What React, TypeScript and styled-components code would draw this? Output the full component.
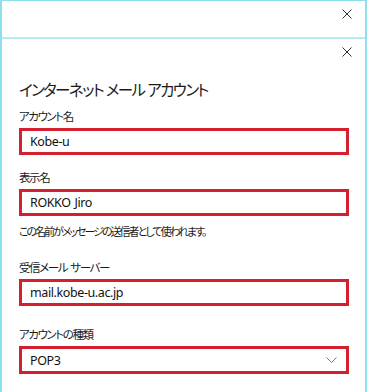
import styled, { createGlobalStyle } from "styled-components";

const GlobalStyle = createGlobalStyle`
  html, body {
    margin: 0;
    padding: 0;
    background: #ffffff;
  }
  * {
    box-sizing: border-box;
  }
`;

const jp = `"Noto Sans CJK JP", "Noto Sans", sans-serif`;
const latin = `"Noto Sans", "Noto Sans CJK JP", sans-serif`;

const Frame = styled.div`
  width: 367px;
  height: 392px;
  background: #ffffff;
  border-top: 1px solid #8fdfea;
  border-left: 2px solid #8fdfea;
  border-right: 2px solid #8fdfea;
  display: flex;
  flex-direction: column;
  overflow: hidden;
  color: #1a1a1a;
  font-family: ${jp};
`;

const TitleBar = styled.div<{ $h: number }>`
  height: ${(p) => p.$h}px;
  flex: none;
  display: flex;
  justify-content: flex-end;
  padding: 8px 13px 0 0;
`;

const Separator = styled.div`
  height: 2px;
  flex: none;
  background: #b6ebf2;
`;

const CloseButton = styled.button`
  width: 10px;
  height: 10px;
  padding: 0;
  border: none;
  background: transparent;
  display: flex;
  align-items: center;
  justify-content: center;
`;

const Content = styled.div`
  padding: 0 16px 0 17px;
  display: flex;
  flex-direction: column;
`;

const Heading = styled.h1`
  margin: 31px 0 0 0;
  font-size: 15.5px;
  font-weight: 400;
  line-height: 22px;
  font-feature-settings: "palt";
  letter-spacing: -1.6px;
  word-spacing: 1px;
`;

const Label = styled.div<{ $top: number }>`
  margin-top: ${(p) => p.$top}px;
  font-size: 11.5px;
  line-height: 17px;
  font-feature-settings: "palt";
  letter-spacing: -1.4px;
  word-spacing: 2px;
`;

const Field = styled.div<{ $top: number }>`
  margin-top: ${(p) => p.$top}px;
  height: 27px;
  flex: none;
  border: 3px solid #d4202e;
  display: flex;
  align-items: center;
  justify-content: space-between;
  padding: 0 9px 0 8px;
  font-family: ${latin};
  font-size: 12.5px;
  letter-spacing: -0.4px;
  word-spacing: 1px;
  color: #111;
`;

const Select = styled(Field)`
  height: 28px;
`;

const Hint = styled.div`
  margin-top: 7px;
  font-size: 11px;
  line-height: 16px;
  font-feature-settings: "palt";
  letter-spacing: -2px;
`;

function CloseIcon() {
  return (
    <svg width="10" height="10" viewBox="0 0 10 10">
      <path d="M0.5 0.5 L9.5 9.5 M9.5 0.5 L0.5 9.5" stroke="#333" strokeWidth="1" fill="none" />
    </svg>
  );
}

function Chevron() {
  return (
    <svg width="11" height="6" viewBox="0 0 11 6">
      <path d="M0.5 0.5 L5.5 5.5 L10.5 0.5" stroke="#777" strokeWidth="1" fill="none" />
    </svg>
  );
}

export default function App() {
  return (
    <>
      <GlobalStyle />
      <Frame>
        <TitleBar $h={36}>
          <CloseButton><CloseIcon /></CloseButton>
        </TitleBar>
        <Separator />
        <TitleBar $h={0}>
          <CloseButton><CloseIcon /></CloseButton>
        </TitleBar>
        <Content>
          <Heading>インターネット メール アカウント</Heading>
          <Label $top={8}>アカウント名</Label>
          <Field $top={3}>Kobe-u</Field>
          <Label $top={14}>表示名</Label>
          <Field $top={3}>ROKKO Jiro</Field>
          <Hint>この名前がメッセージの送信者として使われます。</Hint>
          <Label $top={20}>受信メール サーバー</Label>
          <Field $top={3}>mail.kobe-u.ac.jp</Field>
          <Label $top={20}>アカウントの種類</Label>
          <Select $top={3}>
            <span>POP3</span>
            <Chevron />
          </Select>
        </Content>
      </Frame>
    </>
  );
}
